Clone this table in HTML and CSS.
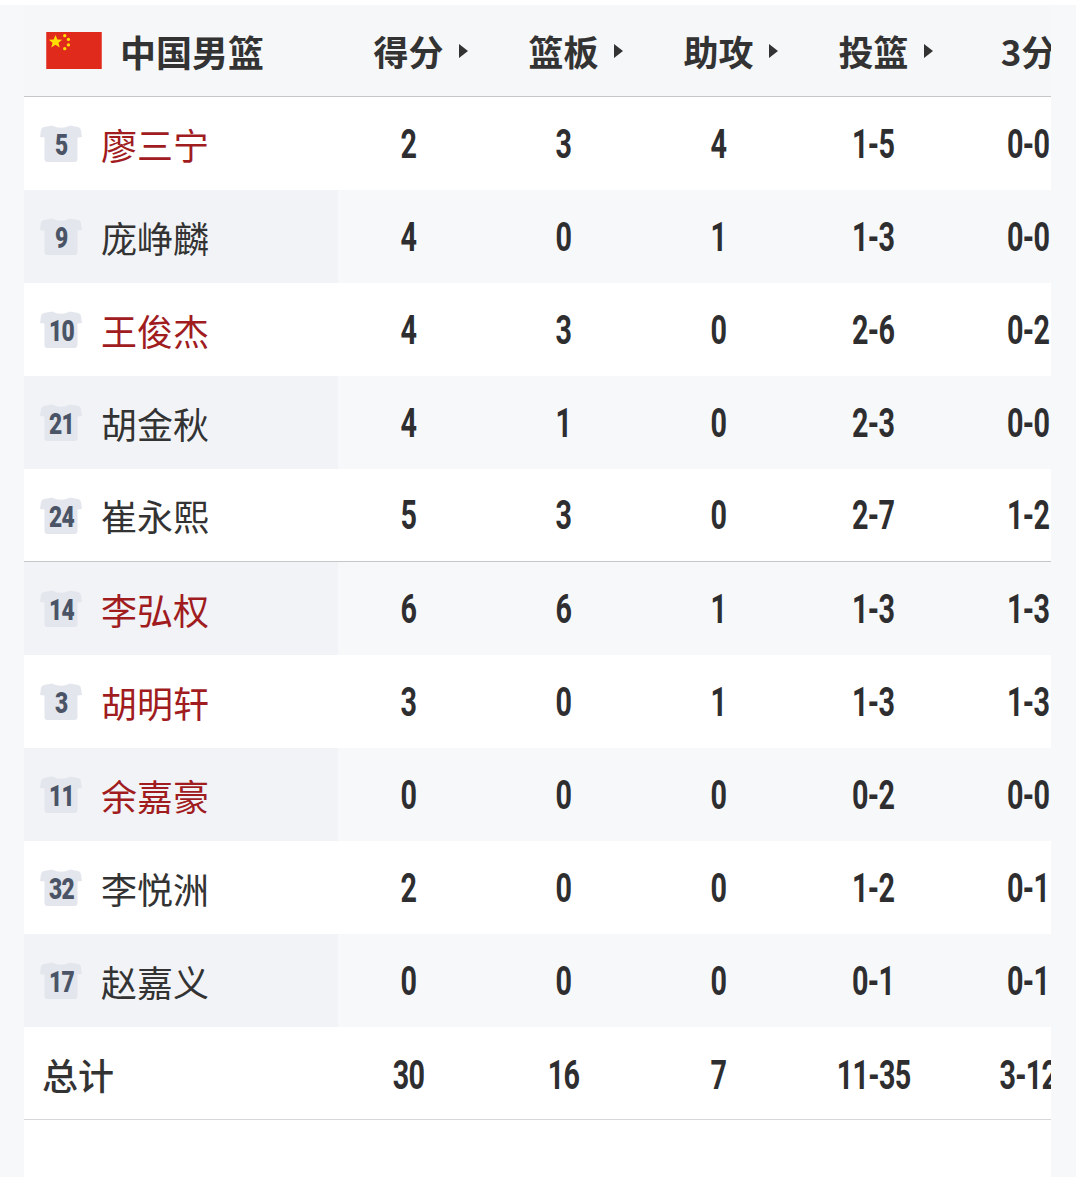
FILE: index.html
```html
<!DOCTYPE html>
<html lang="zh">
<head>
<meta charset="utf-8">
<link rel="stylesheet" href="styles.css">
</head>
<body>
<div class="topstrip"></div>
<div class="board">
  <div class="row head">
    <div class="namecell">
      <svg class="flag" viewBox="0 0 30 20" width="56" height="37">
        <rect width="30" height="20" fill="#e02a1c"/>
        <polygon fill="#ffde00" points="5,1.6 6,4.1 8.6,4.2 6.6,5.8 7.3,8.4 5,6.9 2.7,8.4 3.4,5.8 1.4,4.2 4,4.1"/>
        <circle cx="10" cy="2" r="0.9" fill="#ffde00"/>
        <circle cx="12" cy="4" r="0.9" fill="#ffde00"/>
        <circle cx="12" cy="7" r="0.9" fill="#ffde00"/>
        <circle cx="10" cy="9" r="0.9" fill="#ffde00"/>
      </svg>
      <span class="team">中国男篮</span>
    </div>
    <div class="cell"><span class="hl">得分</span></div>
    <div class="cell"><span class="hl">篮板</span></div>
    <div class="cell"><span class="hl">助攻</span></div>
    <div class="cell"><span class="hl">投篮</span></div>
    <div class="cell"><span class="hl">3分</span></div>
  </div>

  <div class="row">
    <div class="namecell"><span class="jersey"><svg viewBox="0 0 42 37"><path d="M12 0.5 L4 2 Q1.5 2.6 1 5 L0 12 L4.5 12.5 L4.5 34 Q4.5 37 7.5 37 L34.5 37 Q37.5 37 37.5 34 L37.5 12.5 L42 12 L41 5 Q40.5 2.6 38 2 L30 0.5 Q21 5 12 0.5 Z"/></svg><b><i>5</i></b></span><span class="pname red">廖三宁</span></div>
    <div class="cell"><i>2</i></div><div class="cell"><i>3</i></div><div class="cell"><i>4</i></div><div class="cell"><i>1-5</i></div><div class="cell"><i>0-0</i></div>
  </div>
  <div class="row alt">
    <div class="namecell"><span class="jersey"><svg viewBox="0 0 42 37"><path d="M12 0.5 L4 2 Q1.5 2.6 1 5 L0 12 L4.5 12.5 L4.5 34 Q4.5 37 7.5 37 L34.5 37 Q37.5 37 37.5 34 L37.5 12.5 L42 12 L41 5 Q40.5 2.6 38 2 L30 0.5 Q21 5 12 0.5 Z"/></svg><b><i>9</i></b></span><span class="pname">庞峥麟</span></div>
    <div class="cell"><i>4</i></div><div class="cell"><i>0</i></div><div class="cell"><i>1</i></div><div class="cell"><i>1-3</i></div><div class="cell"><i>0-0</i></div>
  </div>
  <div class="row">
    <div class="namecell"><span class="jersey"><svg viewBox="0 0 42 37"><path d="M12 0.5 L4 2 Q1.5 2.6 1 5 L0 12 L4.5 12.5 L4.5 34 Q4.5 37 7.5 37 L34.5 37 Q37.5 37 37.5 34 L37.5 12.5 L42 12 L41 5 Q40.5 2.6 38 2 L30 0.5 Q21 5 12 0.5 Z"/></svg><b><i>10</i></b></span><span class="pname red">王俊杰</span></div>
    <div class="cell"><i>4</i></div><div class="cell"><i>3</i></div><div class="cell"><i>0</i></div><div class="cell"><i>2-6</i></div><div class="cell"><i>0-2</i></div>
  </div>
  <div class="row alt">
    <div class="namecell"><span class="jersey"><svg viewBox="0 0 42 37"><path d="M12 0.5 L4 2 Q1.5 2.6 1 5 L0 12 L4.5 12.5 L4.5 34 Q4.5 37 7.5 37 L34.5 37 Q37.5 37 37.5 34 L37.5 12.5 L42 12 L41 5 Q40.5 2.6 38 2 L30 0.5 Q21 5 12 0.5 Z"/></svg><b><i>21</i></b></span><span class="pname">胡金秋</span></div>
    <div class="cell"><i>4</i></div><div class="cell"><i>1</i></div><div class="cell"><i>0</i></div><div class="cell"><i>2-3</i></div><div class="cell"><i>0-0</i></div>
  </div>
  <div class="row split">
    <div class="namecell"><span class="jersey"><svg viewBox="0 0 42 37"><path d="M12 0.5 L4 2 Q1.5 2.6 1 5 L0 12 L4.5 12.5 L4.5 34 Q4.5 37 7.5 37 L34.5 37 Q37.5 37 37.5 34 L37.5 12.5 L42 12 L41 5 Q40.5 2.6 38 2 L30 0.5 Q21 5 12 0.5 Z"/></svg><b><i>24</i></b></span><span class="pname">崔永熙</span></div>
    <div class="cell"><i>5</i></div><div class="cell"><i>3</i></div><div class="cell"><i>0</i></div><div class="cell"><i>2-7</i></div><div class="cell"><i>1-2</i></div>
  </div>
  <div class="row alt">
    <div class="namecell"><span class="jersey"><svg viewBox="0 0 42 37"><path d="M12 0.5 L4 2 Q1.5 2.6 1 5 L0 12 L4.5 12.5 L4.5 34 Q4.5 37 7.5 37 L34.5 37 Q37.5 37 37.5 34 L37.5 12.5 L42 12 L41 5 Q40.5 2.6 38 2 L30 0.5 Q21 5 12 0.5 Z"/></svg><b><i>14</i></b></span><span class="pname red">李弘权</span></div>
    <div class="cell"><i>6</i></div><div class="cell"><i>6</i></div><div class="cell"><i>1</i></div><div class="cell"><i>1-3</i></div><div class="cell"><i>1-3</i></div>
  </div>
  <div class="row">
    <div class="namecell"><span class="jersey"><svg viewBox="0 0 42 37"><path d="M12 0.5 L4 2 Q1.5 2.6 1 5 L0 12 L4.5 12.5 L4.5 34 Q4.5 37 7.5 37 L34.5 37 Q37.5 37 37.5 34 L37.5 12.5 L42 12 L41 5 Q40.5 2.6 38 2 L30 0.5 Q21 5 12 0.5 Z"/></svg><b><i>3</i></b></span><span class="pname red">胡明轩</span></div>
    <div class="cell"><i>3</i></div><div class="cell"><i>0</i></div><div class="cell"><i>1</i></div><div class="cell"><i>1-3</i></div><div class="cell"><i>1-3</i></div>
  </div>
  <div class="row alt">
    <div class="namecell"><span class="jersey"><svg viewBox="0 0 42 37"><path d="M12 0.5 L4 2 Q1.5 2.6 1 5 L0 12 L4.5 12.5 L4.5 34 Q4.5 37 7.5 37 L34.5 37 Q37.5 37 37.5 34 L37.5 12.5 L42 12 L41 5 Q40.5 2.6 38 2 L30 0.5 Q21 5 12 0.5 Z"/></svg><b><i>11</i></b></span><span class="pname red">余嘉豪</span></div>
    <div class="cell"><i>0</i></div><div class="cell"><i>0</i></div><div class="cell"><i>0</i></div><div class="cell"><i>0-2</i></div><div class="cell"><i>0-0</i></div>
  </div>
  <div class="row">
    <div class="namecell"><span class="jersey"><svg viewBox="0 0 42 37"><path d="M12 0.5 L4 2 Q1.5 2.6 1 5 L0 12 L4.5 12.5 L4.5 34 Q4.5 37 7.5 37 L34.5 37 Q37.5 37 37.5 34 L37.5 12.5 L42 12 L41 5 Q40.5 2.6 38 2 L30 0.5 Q21 5 12 0.5 Z"/></svg><b><i>32</i></b></span><span class="pname">李悦洲</span></div>
    <div class="cell"><i>2</i></div><div class="cell"><i>0</i></div><div class="cell"><i>0</i></div><div class="cell"><i>1-2</i></div><div class="cell"><i>0-1</i></div>
  </div>
  <div class="row alt">
    <div class="namecell"><span class="jersey"><svg viewBox="0 0 42 37"><path d="M12 0.5 L4 2 Q1.5 2.6 1 5 L0 12 L4.5 12.5 L4.5 34 Q4.5 37 7.5 37 L34.5 37 Q37.5 37 37.5 34 L37.5 12.5 L42 12 L41 5 Q40.5 2.6 38 2 L30 0.5 Q21 5 12 0.5 Z"/></svg><b><i>17</i></b></span><span class="pname">赵嘉义</span></div>
    <div class="cell"><i>0</i></div><div class="cell"><i>0</i></div><div class="cell"><i>0</i></div><div class="cell"><i>0-1</i></div><div class="cell"><i>0-1</i></div>
  </div>
  <div class="row total">
    <div class="namecell"><span class="tlabel">总计</span></div>
    <div class="cell"><i>30</i></div><div class="cell"><i>16</i></div><div class="cell"><i>7</i></div><div class="cell"><i>11-35</i></div><div class="cell"><i>3-12</i></div>
  </div>
  <div class="filler"></div>
</div>
</body>
</html>
```

FILE: styles.css
```css
html, body {
  margin: 0;
  padding: 0;
}
body {
  background: #f7f8fa;
  width: 1076px;
  height: 1177px;
  overflow: hidden;
  font-family: "Noto Sans CJK SC", "Noto Sans", sans-serif;
  color: #333;
}
.topstrip {
  height: 5px;
  background: #fff;
}
.board {
  margin-left: 24px;
  width: 1027px;
  overflow: hidden;
  background: #fff;
}
.row {
  display: flex;
  height: 93px;
  box-sizing: border-box;
  width: 1089px;
}
.row.head {
  height: 92px;
  background: #f6f7f9;
  border-bottom: 1px solid #c4c6ca;
}
.row.alt {
  background: #f7f8fa;
}
.row.alt .namecell {
  background: #f2f3f7;
}
.row.split {
  border-bottom: 1px solid #c4c6ca;
}
.row.total {
  border-bottom: 1px solid #d6d7da;
}
.namecell {
  width: 314px;
  flex: none;
  display: flex;
  align-items: center;
  padding-left: 16px;
  box-sizing: border-box;
}
.head .namecell {
  padding-left: 22px;
}
.flag {
  display: block;
  margin-right: 18px;
}
.team {
  font-size: 36px;
  font-weight: 700;
  color: #333;
}
.cell {
  width: 155px;
  flex: none;
  display: flex;
  align-items: center;
  justify-content: center;
  padding-right: 14px;
  box-sizing: border-box;
}
.cell i {
  font-style: normal;
  font-family: Roboto, "Liberation Sans", sans-serif;
  font-weight: 700;
  font-size: 41px;
  color: #2e2e30;
  display: inline-block;
  transform: scaleX(0.7);
  letter-spacing: -1px;
}
.total .cell i {
  margin-top: 4px;
}
.hl {
  display: inline-flex;
  align-items: center;
  gap: 15px;
  padding-left: 24px;
  font-size: 35px;
  font-weight: 700;
  color: #333;
  white-space: nowrap;
}
.hl::after {
  content: "";
  width: 0;
  height: 0;
  border-top: 7px solid transparent;
  border-bottom: 7px solid transparent;
  border-left: 9px solid #333;
}
.jersey {
  display: inline-grid;
  width: 42px;
  height: 37px;
  margin-right: 19px;
}
.jersey svg {
  grid-area: 1 / 1;
  width: 42px;
  height: 37px;
  fill: #e3e6ec;
}
.jersey b {
  grid-area: 1 / 1;
  display: flex;
  align-items: center;
  justify-content: center;
  padding-top: 3px;
}
.jersey b i {
  font-style: normal;
  font-family: Roboto, "Liberation Sans", sans-serif;
  font-weight: 900;
  font-size: 30px;
  line-height: 1;
  color: #4a5466;
  display: inline-block;
  transform: scaleX(0.76);
  letter-spacing: -1px;
}
.pname {
  font-size: 36px;
  font-weight: 400;
  color: #333;
}
.pname.red {
  color: #a01c1e;
}
.tlabel {
  font-size: 36px;
  font-weight: 500;
  color: #333;
  padding-left: 2px;
  margin-top: 2px;
}
.filler {
  height: 60px;
  background: #fff;
}
```
